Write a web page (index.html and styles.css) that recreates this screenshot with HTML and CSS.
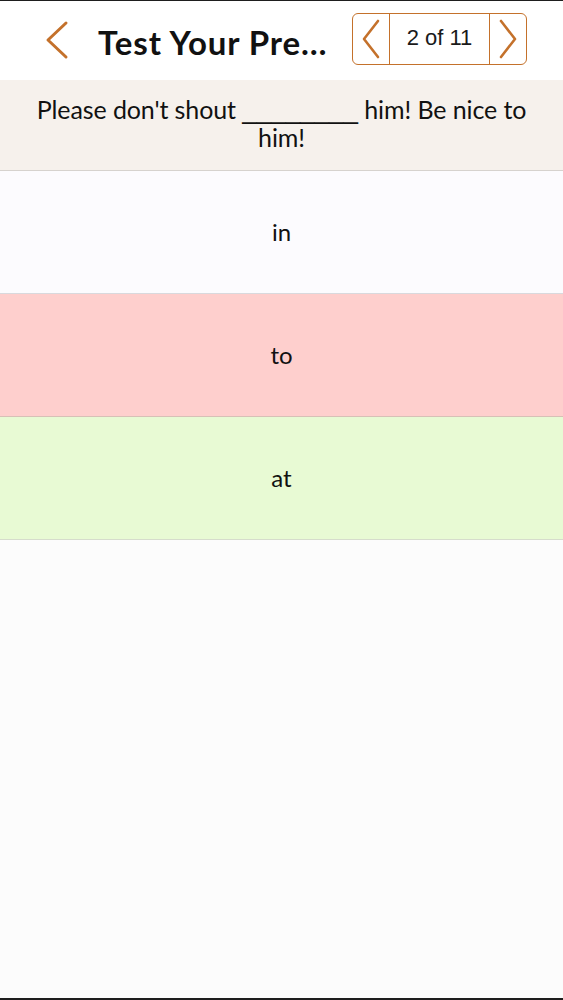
FILE: index.html
```html
<!DOCTYPE html>
<html>
<head>
<meta charset="utf-8">
<link rel="stylesheet" href="styles.css">
</head>
<body>
<div class="screen">
  <header class="nav">
    <div class="back">
      <svg width="28" height="40" viewBox="0 0 28 40"><path d="M24 3 L6 20 L24 37" fill="none" stroke="#c4712b" stroke-width="3" stroke-linecap="round" stroke-linejoin="round"/></svg>
    </div>
    <div class="title">Test Your Pre…</div>
    <div class="pager">
      <div class="pbtn">
        <svg width="24" height="42" viewBox="0 0 24 42"><path d="M19 3 L5 21 L19 39" fill="none" stroke="#c4712b" stroke-width="2.6" stroke-linecap="round" stroke-linejoin="round"/></svg>
      </div>
      <div class="pcount">2 of 11</div>
      <div class="pbtn">
        <svg width="24" height="42" viewBox="0 0 24 42"><path d="M5 3 L19 21 L5 39" fill="none" stroke="#c4712b" stroke-width="2.6" stroke-linecap="round" stroke-linejoin="round"/></svg>
      </div>
    </div>
  </header>
  <section class="question">Please don't shout <span class="blank">________</span> him! Be nice to him!</section>
  <div class="option opt-plain">in</div>
  <div class="option opt-wrong">to</div>
  <div class="option opt-right">at</div>
  <div class="rest"></div>
</div>
</body>
</html>
```
FILE: styles.css
```css
html, body {
  margin: 0;
  padding: 0;
  background: #fcfcfc;
}
.screen {
  width: 563px;
  height: 1000px;
  display: flex;
  flex-direction: column;
  border-top: 1px solid #1e1e1e;
  border-bottom: 2px solid #1e1e1e;
  box-sizing: border-box;
  font-family: "Lato", "Open Sans", sans-serif;
  color: #111;
}
.nav {
  height: 79px;
  flex: none;
  background: #ffffff;
  display: flex;
  align-items: center;
  padding-left: 42px;
  box-sizing: border-box;
}
.back {
  width: 28px;
  height: 40px;
  margin-top: -1px;
}
.back svg { display: block; }
.title {
  margin-left: 28px;
  font-weight: 700;
  font-size: 33px;
  letter-spacing: 0.9px;
  width: 254px;
  white-space: nowrap;
  margin-top: 3px;
}
.pager {
  margin-top: -3px;
  width: 175px;
  height: 52px;
  box-sizing: border-box;
  border: 1.5px solid #c4712b;
  border-radius: 6px;
  display: flex;
}
.pbtn {
  width: 36px;
  display: flex;
  align-items: center;
  justify-content: center;
}
.pbtn svg { display: block; }
.pcount {
  flex: 1;
  border-left: 1.5px solid #c4712b;
  border-right: 1.5px solid #c4712b;
  display: flex;
  align-items: center;
  justify-content: center;
  font-family: "Liberation Sans", Arial, sans-serif;
  font-size: 22px;
  color: #1a1a1a;
  padding-bottom: 2px;
}
.question {
  height: 91px;
  flex: none;
  box-sizing: border-box;
  background: #f6f1ec;
  border-bottom: 1px solid #d6d2ce;
  font-size: 25px;
  line-height: 28px;
  text-align: center;
  padding: 15px 32px 0;
  letter-spacing: -0.1px;
}
.blank {
  display: inline-block;
  font-family: "Liberation Sans", Arial, sans-serif;
  font-size: 26px;
  line-height: 20px;
  letter-spacing: 0;
}
.option {
  height: 123px;
  flex: none;
  box-sizing: border-box;
  display: flex;
  align-items: center;
  justify-content: center;
  font-size: 24px;
  padding-bottom: 1px;
}
.opt-plain {
  background: #fcfbfe;
  border-bottom: 1px solid #d9d9dd;
}
.opt-wrong {
  background: #fecfcd;
  border-bottom: 1px solid #d7c0b6;
}
.opt-right {
  background: #e8fad4;
  border-bottom: 1px solid #d6dccc;
}
.rest {
  flex: 1;
  background: #fcfcfc;
}
```
